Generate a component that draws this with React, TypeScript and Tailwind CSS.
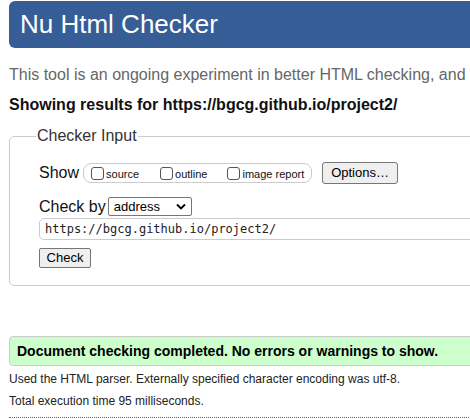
import React from "react";

function Box({ label }: { label: string }) {
  return (
    <span className="flex items-center">
      <span className="w-[13px] h-[13px] border border-[#555] rounded-[3px] bg-white box-border" />
      <span className="ml-[2px] text-[11px] text-[#111] leading-[13px] mt-[3px]">{label}</span>
    </span>
  );
}

export default function App() {
  return (
    <div className="w-[470px] h-[419px] overflow-hidden bg-white font-['Liberation_Sans',Arial,sans-serif]">
      <div className="w-[560px] ml-[9px] pt-[1px]">
        <h1 className="bg-[#365d95] text-white h-[47px] leading-[47px] rounded-[6px] pl-[11px] text-[26px] font-normal">
          Nu Html Checker
        </h1>
        <p className="mt-[18px] text-[16px] leading-[18px] text-[#666] whitespace-nowrap">
          This tool is an ongoing experiment in better HTML checking, and its behavior remains subject to change
        </p>
        <p className="mt-[12px] text-[16px] leading-[18px] font-bold text-[#111] whitespace-nowrap">
          Showing results for https://bgcg.github.io/project2/
        </p>
        <fieldset className="mt-[13px] border border-[#ccc] rounded-[5px] pl-[29px] pt-[17px] pb-[17px]">
          <legend className="-ml-[3px] px-[1px] text-[16px] leading-[18px] text-[#333]">Checker Input</legend>
          <div className="flex items-center h-[22px]">
            <span className="text-[16px] leading-[18px] text-[#111]">Show</span>
            <div className="ml-[4px] w-[229px] h-[20px] border border-[#ccc] rounded-[8px] flex items-center pl-[7px]">
              <Box label="source" />
              <span className="w-[21px]" />
              <Box label="outline" />
              <span className="w-[20px]" />
              <Box label="image report" />
            </div>
            <button className="ml-[10px] w-[76px] h-[22px] bg-[#efefef] border border-[#767676] rounded-[3px] text-[13px] text-black leading-[18px]">
              Options…
            </button>
          </div>
          <div className="flex items-center h-[19px] mt-[13px]">
            <span className="text-[16px] leading-[18px] text-[#111]">Check by</span>
            <div className="ml-[2px] w-[84px] h-[19px] border border-[#767676] rounded-[2px] flex items-center pl-[5px] pr-[4px] justify-between">
              <span className="text-[13px] leading-[15px] text-black">address</span>
              <svg width="10" height="7" viewBox="0 0 10 7" className="mr-[1px]">
                <path d="M1 1.5 L5 5.5 L9 1.5" fill="none" stroke="#000" strokeWidth="1.8" />
              </svg>
            </div>
          </div>
          <div className="mt-[2px] h-[22px] border border-[#ccc] rounded-[5px] flex items-center pl-[5px]">
            <span className="font-['DejaVu_Sans_Mono',monospace] text-[12px] leading-[14px] text-[#222]">
              https://bgcg.github.io/project2/
            </span>
          </div>
          <button className="mt-[8px] w-[52px] h-[20px] bg-[#efefef] border border-[#767676] rounded-[2px] text-[13px] text-black leading-[16px] block">
            Check
          </button>
        </fieldset>
        <div className="mt-[50px] h-[30px] bg-[#ccffcc] border border-[#ccc] rounded-[4px] flex items-center pl-[7px]">
          <span className="text-[14px] font-bold text-black leading-[16px]">
            Document checking completed. No errors or warnings to show.
          </span>
        </div>
        <p className="mt-[6px] text-[12px] leading-[14px] text-[#222] whitespace-nowrap">
          Used the HTML parser. Externally specified character encoding was utf-8.
        </p>
        <p className="mt-[8px] text-[12px] leading-[14px] text-[#222] whitespace-nowrap">
          Total execution time 95 milliseconds.
        </p>
        <div className="mt-[9px] border-t border-dotted border-[#666]" />
      </div>
    </div>
  );
}
